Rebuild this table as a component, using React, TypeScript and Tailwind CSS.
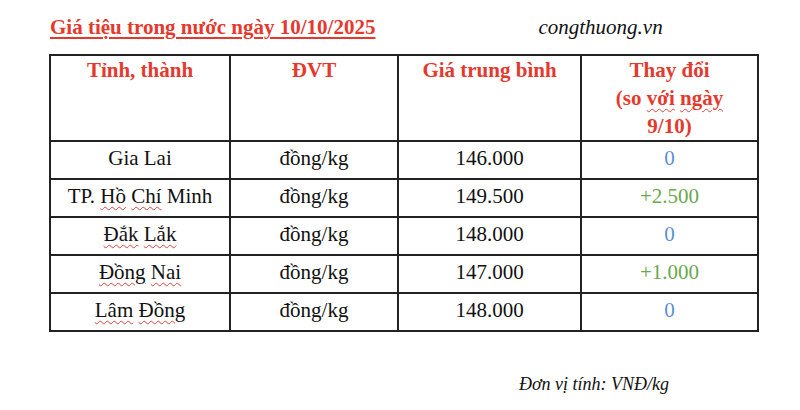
const rows = [
  { name: "Gia Lai", price: "146.000", change: "0" },
  { name: "TP. Hồ Chí Minh", price: "149.500", change: "+2.500" },
  { name: "Đắk Lắk", price: "148.000", change: "0" },
  { name: "Đồng Nai", price: "147.000", change: "+1.000" },
  { name: "Lâm Đồng", price: "148.000", change: "0" },
];

// spell-check squiggle, like in the Word screenshot
const sq = "underline decoration-wavy decoration-[#e0443a] decoration-1 underline-offset-[3px]";

function Name({ name }: { name: string }) {
  if (name === "TP. Hồ Chí Minh")
    return (
      <>
        TP. <span className={sq}>Hồ</span> <span className={sq}>Chí</span> Minh
      </>
    );
  if (name === "Gia Lai") return <>{name}</>;
  const [a, b] = name.split(" ");
  return (
    <>
      <span className={sq}>{a}</span> <span className={sq}>{b}</span>
    </>
  );
}

const cell = "border-2 border-[#222] text-center align-top pt-[3px] leading-[26px]";

export default function App() {
  return (
    <div className="w-[800px] h-[410px] bg-white relative overflow-hidden [font-family:'Liberation_Serif',serif] text-[#111]">
      <div className="flex items-end h-[40px]">
        <h1 className="ml-[50px] text-[21px] font-bold text-[#e5392d] underline decoration-2 underline-offset-[3px] leading-[26px]">
          Giá tiệu trong nước ngày 10/10/2025
        </h1>
        <span className="ml-[163px] text-[21px] italic leading-[26px]">congthuong.vn</span>
      </div>

      <table className="ml-[49px] mt-[14px] border-collapse table-fixed w-[708px] text-[21px]">
        <colgroup>
          <col className="w-[180px]" />
          <col className="w-[168px]" />
          <col className="w-[183px]" />
          <col className="w-[177px]" />
        </colgroup>
        <thead>
          <tr className="h-[84px]">
            {["Tỉnh, thành", "ĐVT", "Giá trung bình"].map((h) => (
              <th key={h} className="border-2 border-[#222] align-top pt-0 font-bold text-[#e5392d] leading-[28px]">
                {h}
              </th>
            ))}
            <th className="border-2 border-[#222] align-top pt-0 font-bold text-[#e5392d] leading-[28px]">
              Thay đổi
              <br />
              (so <span className={sq}>với</span> <span className={sq}>ngày</span>
              <br />
              9/10)
            </th>
          </tr>
        </thead>
        <tbody>
          {rows.map((r) => (
            <tr key={r.name} className="h-[38px]">
              <td className={cell}>
                <Name name={r.name} />
              </td>
              <td className={cell}>đồng/kg</td>
              <td className={cell}>{r.price}</td>
              <td className={`${cell} ${r.change === "0" ? "text-[#5b8fd8]" : "text-[#6aa84f]"}`}>{r.change}</td>
            </tr>
          ))}
        </tbody>
      </table>

      <div className="mt-[41px] ml-[519px] text-[18px] italic leading-[22px]">Đơn vị tính: VNĐ/kg</div>
    </div>
  );
}
